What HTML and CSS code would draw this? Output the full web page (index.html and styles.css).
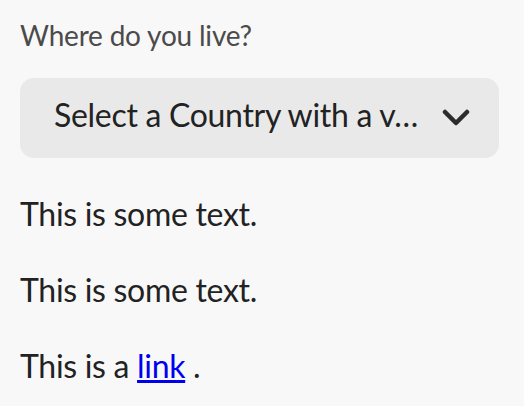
FILE: index.html
```html
<!DOCTYPE html>
<html lang="en">
<head>
<meta charset="utf-8">
<title>Picker</title>
<link rel="stylesheet" href="styles.css">
</head>
<body>
<main class="page">
  <label class="field-label" for="country">Where do you live?</label>
  <button class="picker" id="country" type="button">
    <span class="picker-value">Select a Country with a v…</span>
    <svg class="chevron" width="28" height="18" viewBox="0 0 28 18" aria-hidden="true">
      <path d="M3 3 L14 14 L25 3" fill="none" stroke="#2c2c2c" stroke-width="4.5" stroke-linecap="round" stroke-linejoin="round"/>
    </svg>
  </button>
  <p class="text">This is some text.</p>
  <p class="text">This is some text.</p>
  <p class="text">This is a <a href="#" class="link">link</a> .</p>
</main>
</body>
</html>
```
FILE: styles.css
```css
html, body {
  margin: 0;
  padding: 0;
  background: #f8f8f8;
}
body {
  font-family: Lato, "Open Sans", sans-serif;
}
.page {
  display: flex;
  flex-direction: column;
  align-items: flex-start;
  padding: 17px 25px 0 20px;
}
.field-label {
  font-size: 28px;
  line-height: 36px;
  letter-spacing: -0.2px;
  color: #4b4b4b;
}
.picker {
  margin-top: 25px;
  align-self: stretch;
  height: 80px;
  box-sizing: border-box;
  border: none;
  border-radius: 14px;
  background: #e9e9e9;
  display: flex;
  align-items: center;
  justify-content: space-between;
  padding: 0 29px 6px 34px;
  font-family: inherit;
  font-size: 32px;
  line-height: 40px;
  letter-spacing: -0.3px;
  color: #222222;
  text-align: left;
}
.picker-value {
  white-space: nowrap;
}
.chevron {
  display: block;
  flex: none;
  margin-top: 6px;
}
.text {
  margin: 36px 0 0;
  font-size: 32px;
  line-height: 40px;
  letter-spacing: -0.3px;
  color: #222222;
}
.text + .text {
  margin-top: 36px;
}
.link {
  color: #0000ee;
  text-decoration: underline;
}
```
